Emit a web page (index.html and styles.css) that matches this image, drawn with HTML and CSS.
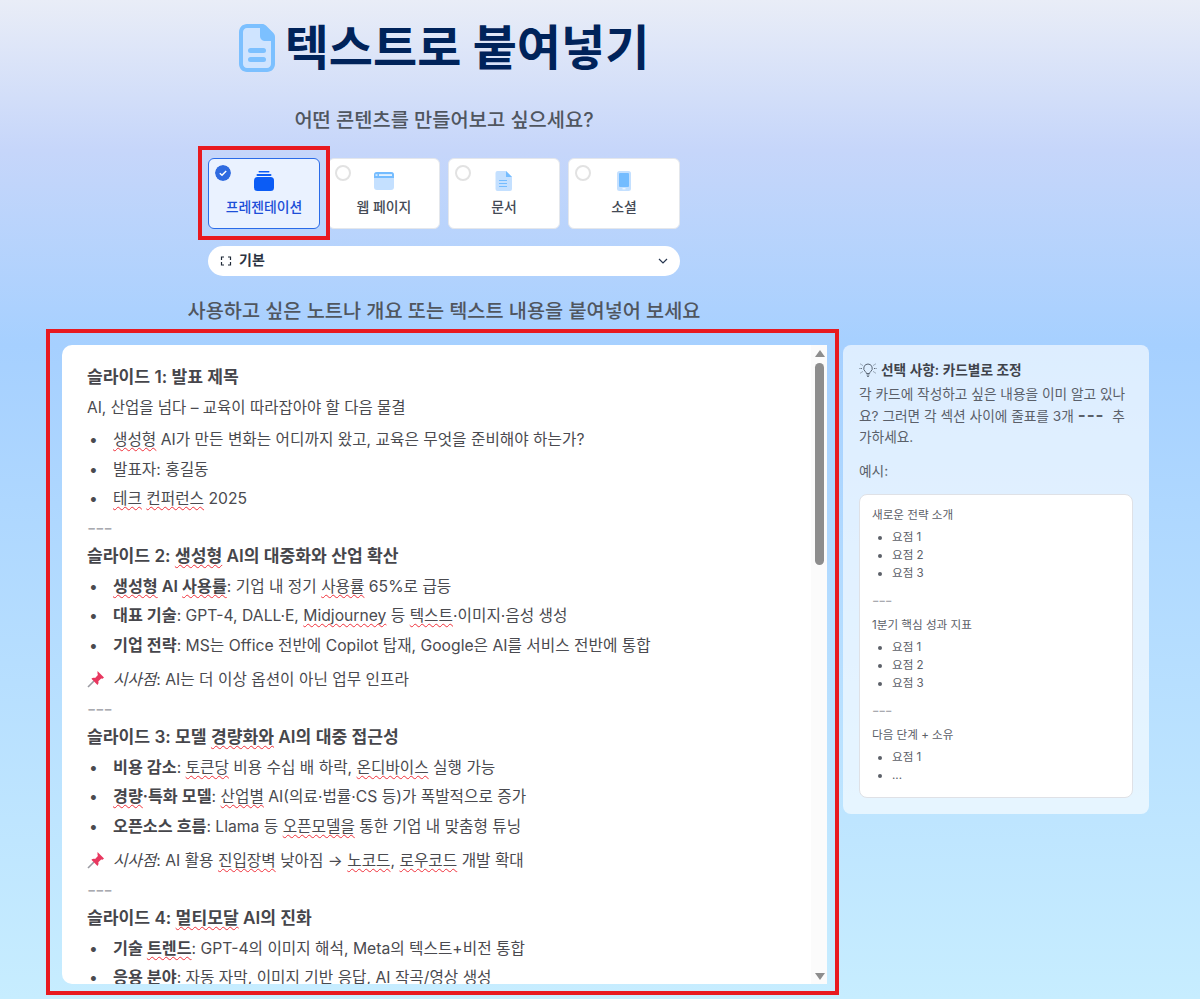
FILE: index.html
```html
<!DOCTYPE html>
<html lang="ko">
<head>
<meta charset="utf-8">
<title>텍스트로 붙여넣기</title>
<link rel="stylesheet" href="styles.css">
</head>
<body>
<div class="page">
  <div class="column">
    <h1 class="title">
      <svg class="title-icon" viewBox="0 0 36 48"><path fill="#7cc0ff" d="M8 0h15c1.600 0 3 .6 4.200 1.800l7 7C35.400 10 36 11.400 36 13v27c0 4.400-3.600 8-8 8H8c-4.400 0-8-3.600-8-8V8c0-4.400 3.600-8 8-8z"/><path fill="#cfe4ff" d="M4 8c0-2.200 1.800-4 4-4h13v8c0 2.800 2.200 5 5 5h6v23c0 2.200-1.800 4-4 4H8c-2.200 0-4-1.800-4-4z"/><rect x="9" y="24" width="18" height="5" rx="2.500" fill="#7cc0ff"/><rect x="9" y="33" width="18" height="5" rx="2.500" fill="#7cc0ff"/></svg>
      <span>텍스트로 붙여넣기</span>
    </h1>
    <h2 class="question">어떤 콘텐츠를 만들어보고 싶으세요?</h2>
    <div class="cards">
      <div class="card selected">
        <svg class="radio" viewBox="0 0 16 16"><circle cx="8" cy="8" r="8" fill="#2f6be0"/><path d="M4.800 8.300l2.200 2 4.200-4.300" fill="none" stroke="#fff" stroke-width="1.500"/></svg>
        <svg class="card-icon" viewBox="0 0 20 20"><rect x="4.500" y="0" width="11" height="1.500" rx=".7" fill="#0b5cf5"/><rect x="2.500" y="3" width="15" height="2" rx="1" fill="#0b5cf5"/><rect x="0" y="6" width="20" height="14" rx="3.500" fill="#0b5cf5"/></svg>
        <span class="card-label">프레젠테이션</span>
      </div>
      <div class="card">
        <span class="radio-empty"></span>
        <svg class="card-icon" viewBox="0 0 20 20"><rect y="1" width="20" height="18" rx="3" fill="#c4e0ff"/><path d="M3 1h14a3 3 0 0 1 3 3v3H0V4a3 3 0 0 1 3-3z" fill="#74bcff"/><rect x="1.500" y="3.300" width="2" height="1.500" fill="#e6f3ff"/><rect x="5" y="3.300" width="13" height="1.500" fill="#fff"/></svg>
        <span class="card-label">웹 페이지</span>
      </div>
      <div class="card">
        <span class="radio-empty"></span>
        <svg class="card-icon" viewBox="0 0 20 20"><path d="M3.500 0h8.500l6 6v12a2 2 0 0 1-2 2H3.500a2 2 0 0 1-2-2V2a2 2 0 0 1 2-2z" fill="#c4e0ff"/><path d="M12 0l6 6h-6z" fill="#74bcff"/><path d="M5 9.500h8M5 12.500h8M5 15.500h8" stroke="#74bcff" stroke-width="1"/></svg>
        <span class="card-label">문서</span>
      </div>
      <div class="card">
        <span class="radio-empty"></span>
        <svg class="card-icon" viewBox="0 0 20 20"><rect x="3" y="0" width="14" height="20" rx="2.500" fill="#c4e0ff"/><rect x="5" y="2" width="10" height="14" rx="1" fill="#74bcff"/><rect x="8.500" y="17.300" width="3" height="1" fill="#fff"/></svg>
        <span class="card-label">소셜</span>
      </div>
    </div>
    <div class="select">
      <svg class="select-icon" viewBox="0 0 12 12"><path d="M1.500 5V2H4M8 2h2.500v3M10.500 7v3H8M4 10H1.500V7" fill="none" stroke="#1f2937" stroke-width="1.200"/></svg>
      <span class="select-text">기본</span>
      <svg class="chevron" viewBox="0 0 12 12"><path d="M2 4l4 4 4-4" fill="none" stroke="#27364f" stroke-width="1.200"/></svg>
    </div>
    <h2 class="prompt">사용하고 싶은 노트나 개요 또는 텍스트 내용을 붙여넣어 보세요</h2>
  </div>
  <div class="workspace">
    <div class="editor">
      <div class="doc">
        <p class="head first">슬라이드 1: 발표 제목</p>
        <p class="para">AI, 산업을 넘다 – 교육이 따라잡아야 할 다음 물결</p>
        <ul class="list intro">
          <li><span class="typo">생성형</span> AI가 만든 변화는 어디까지 왔고, 교육은 무엇을 준비해야 하는가?</li>
          <li>발표자: 홍길동</li>
          <li><span class="typo">테크</span> <span class="typo">컨퍼런스</span> 2025</li>
        </ul>
        <p class="rule">---</p>
        <p class="head">슬라이드 2: <span class="typo">생성형</span> AI의 대중화와 산업 확산</p>
        <ul class="list">
          <li><b><span class="typo">생성형</span> AI <span class="typo">사용률</span></b>: 기업 내 정기 <span class="typo">사용률</span> 65%로 급등</li>
          <li><b>대표 기술</b>: GPT-4, DALL·E, <span class="typo">Midjourney</span> 등 <span class="typo">텍스트</span>·이미지·음성 생성</li>
          <li><b>기업 전략</b>: MS는 Office 전반에 Copilot 탑재, Google은 AI를 서비스 전반에 통합</li>
        </ul>
        <p class="note"><svg class="pin" viewBox="0 0 18 18"><path d="M1 17l6-6" stroke="#9a9aa2" stroke-width="1.600"/><path d="M10.500 1l6.500 6.500-1.500 1.300-1.300-.4-2.900 2.900c.5 1.500.2 2.600-.8 3.600L4.400 8.800c1-1 2.200-1.300 3.700-.8l2.800-2.900-.4-1.300z" fill="#e8375f"/></svg><i>시사점</i>: AI는 더 이상 옵션이 아닌 업무 인프라</p>
        <p class="rule">---</p>
        <p class="head">슬라이드 3: 모델 <span class="typo">경량화와</span> AI의 대중 접근성</p>
        <ul class="list">
          <li><b>비용 감소</b>: <span class="typo">토큰당</span> 비용 수십 배 하락, <span class="typo">온디바이스</span> 실행 가능</li>
          <li><b><span class="typo">경량</span>·특화 모델</b>: <span class="typo">산업별</span> AI(의료·법률·CS 등)가 폭발적으로 증가</li>
          <li><b>오픈소스 흐름</b>: Llama 등 <span class="typo">오픈모델을</span> 통한 기업 내 맞춤형 튜닝</li>
        </ul>
        <p class="note"><svg class="pin" viewBox="0 0 18 18"><path d="M1 17l6-6" stroke="#9a9aa2" stroke-width="1.600"/><path d="M10.500 1l6.500 6.500-1.500 1.300-1.300-.4-2.900 2.900c.5 1.500.2 2.600-.8 3.600L4.400 8.800c1-1 2.200-1.300 3.700-.8l2.800-2.900-.4-1.300z" fill="#e8375f"/></svg><i>시사점</i>: AI 활용 <span class="typo">진입장벽</span> 낮아짐 → <span class="typo">노코드</span>, <span class="typo">로우코드</span> 개발 확대</p>
        <p class="rule">---</p>
        <p class="head">슬라이드 4: <span class="typo">멀티모달</span> AI의 진화</p>
        <ul class="list">
          <li><b>기술 <span class="typo">트렌드</span></b>: GPT-4의 이미지 해석, Meta의 텍스트+비전 통합</li>
          <li><b>응용 분야</b>: 자동 자막, 이미지 기반 응답, AI 작곡/영상 생성</li>
        </ul>
      </div>
      <div class="scrollbar">
        <span class="arrow-up"></span>
        <span class="thumb"></span>
        <span class="arrow-down"></span>
      </div>
    </div>
    <aside class="tips">
      <p class="tips-title"><svg class="bulb" viewBox="0 0 18 16"><path d="M9 2a4.300 4.300 0 0 0-2.600 7.700c.6.500.9 1 1 1.800h3.200c.1-.8.400-1.300 1-1.800A4.300 4.300 0 0 0 9 2zM7.600 13h2.800M8.200 14.500h1.600" fill="none" stroke="#4b5563" stroke-width=".9"/><path d="M.5 6.500h2.500M15 6.500h2.500M1.500 2l2 1.300M16.500 2l-2 1.300M1.500 11l2-1.300M16.500 11l-2-1.300" stroke="#4b5563" stroke-width=".9" stroke-dasharray="1 .6"/></svg>선택 사항: 카드별로 조정</p>
      <p class="tips-text">각 카드에 작성하고 싶은 내용을 이미 알고 있나요? 그러면 각 섹션 사이에 줄표를 3개 <b class="dashes">---</b>&nbsp; 추가하세요.</p>
      <p class="tips-example">예시:</p>
      <div class="sample">
        <p class="sample-head">새로운 전략 소개</p>
        <ul class="sample-list"><li>요점 1</li><li>요점 2</li><li>요점 3</li></ul>
        <p class="sample-rule">---</p>
        <p class="sample-head">1분기 핵심 성과 지표</p>
        <ul class="sample-list"><li>요점 1</li><li>요점 2</li><li>요점 3</li></ul>
        <p class="sample-rule">---</p>
        <p class="sample-head">다음 단계 + 소유</p>
        <ul class="sample-list"><li>요점 1</li><li>...</li></ul>
      </div>
    </aside>
  </div>
</div>
<div class="mark mark-card"></div>
<div class="mark mark-editor"></div>
</body>
</html>
```
FILE: styles.css
```css
* { box-sizing: border-box; }
html, body { margin: 0; height: 999px; overflow: hidden; }
body {
  font-family: Inter, "Noto Sans CJK KR", sans-serif;
  color: #4a4a4f;
  background: linear-gradient(180deg, #e9edf7 0, #c6d6fa 150px, #a6d0ff 345px, #c7edff 999px);
  position: relative;
}
p, h1, h2, ul { margin: 0; padding: 0; }
.page { padding: 17px 0 0 62px; }
.column { display: flex; flex-direction: column; align-items: center; margin-left: 146px; width: 472px; }
.title {
  display: flex; align-items: center; gap: 10px;
  font-size: 48px; line-height: 62px; font-weight: 700; color: #00235a; white-space: nowrap;
}
.title-icon { width: 36px; height: 48px; }
.question { margin-top: 26px; font-size: 19.800px; line-height: 30px; font-weight: 500; color: #50565f; white-space: nowrap; }
.cards { display: flex; gap: 8px; margin-top: 23px; }
.card {
  position: relative; width: 112px; height: 71px; background: #fff;
  border: 1px solid #e4e7ec; border-radius: 6px;
  display: flex; flex-direction: column; align-items: center; padding-top: 12px;
}
.card.selected { background: #eaf2ff; border-color: #2a6be8; }
.card-icon { width: 20px; height: 20px; }
.card-label { margin-top: 6px; font-size: 13.900px; line-height: 20px; font-weight: 500; color: #444a55; }
.selected .card-label { color: #1d4ed8; }
.radio, .radio-empty { position: absolute; left: 6px; top: 6px; width: 16px; height: 16px; border-radius: 50%; }
.radio-empty { border: 2px solid #e2e2e2; }
.select {
  margin-top: 17px; width: 472px; height: 30px; background: #fff; border-radius: 15px;
  display: flex; align-items: center; padding: 0 11px 0 12px;
}
.select-icon { width: 12px; height: 12px; }
.select-text { margin-left: 7px; font-size: 14px; line-height: 28px; align-self: flex-start; font-weight: 600; color: #2b3342; flex: 1; }
.chevron { width: 12px; height: 12px; }
.prompt { margin-top: 20px; font-size: 19.700px; line-height: 30px; font-weight: 500; color: #50565f; white-space: nowrap; }
.workspace { display: flex; align-items: flex-start; gap: 16px; margin-top: 19px; }
.editor {
  position: relative; width: 765px; height: 639px; background: #fff;
  border-radius: 10px 0 0 10px; overflow: hidden;
}
.doc { padding: 0 25px; font-size: 15.700px; color: #4a4a4f; }
.doc b { font-weight: 600; font-size: 16.200px; line-height: 1; color: #46464b; }
.head { font-size: 17.150px; line-height: 22px; font-weight: 600; color: #46464b; margin-top: 6px; }
.head.first { margin-top: 21px; }
.para { font-size: 15.500px; line-height: 22px; margin-top: 9px; }
.list { list-style: none; padding-left: 26px; margin-top: 10px; }
.head + .list { margin-top: 9px; }
.list li { line-height: 22px; margin-bottom: 7.500px; }
.list.intro li:last-child { margin-bottom: 6.500px; }
.list li::before { content: "•"; display: inline-block; width: 26px; margin-left: -24px; margin-right: -2px; color: #4a4a4f; }
.rule { line-height: 22px; color: #a9aab0; font-size: 20px; font-weight: 400; letter-spacing: -1px; }
.note { line-height: 22px; margin-top: 12px; margin-bottom: 7px; }
.pin { width: 18px; height: 18px; margin-right: 8px; vertical-align: -3px; }
.typo { text-decoration: underline wavy #f0303a 1.300px; text-underline-offset: 2px; text-decoration-skip-ink: none; }
.scrollbar { position: absolute; right: 0; top: 0; bottom: 0; width: 16px; background: #fbfbfb; }
.thumb { position: absolute; left: 4px; top: 18px; width: 9px; height: 202px; background: #8d8d8d; border-radius: 5px; }
.arrow-up, .arrow-down { position: absolute; left: 4px; width: 0; height: 0; border-left: 5px solid transparent; border-right: 5px solid transparent; }
.arrow-up { top: 5px; border-bottom: 7px solid #8d8d8d; }
.arrow-down { bottom: 4px; border-top: 7px solid #8d8d8d; }
.tips {
  width: 306px; height: 469px; padding: 16px; border-radius: 8px;
  background: rgba(255, 255, 255, .62); font-size: 13.700px; color: #5a5f69;
}
.tips-title { display: flex; align-items: center; font-weight: 600; line-height: 18px; color: #3f434b; }
.bulb { width: 18px; height: 16px; margin-right: 4px; }
.tips-text { margin-top: 5px; line-height: 21.500px; }
.dashes { font-weight: 700; font-size: 17px; line-height: 16px; letter-spacing: 1px; }
.tips-example { margin-top: 12px; line-height: 21px; }
.sample {
  margin-top: 12px; width: 274px; height: 304px; background: #fff; border: 1px solid #dfe1e6;
  border-radius: 8px; padding: 12px 12px; font-size: 11.600px; color: #5c6068;
}
.sample-head { line-height: 17px; }
.sample-list { list-style: disc; padding-left: 20px; margin-top: 4px; }
.sample-list li { line-height: 18px; }
.sample-rule { margin-top: 9px; margin-bottom: 8px; line-height: 18px; font-size: 16px; letter-spacing: -.8px; color: #a9aab0; }
.mark { position: absolute; border: 4px solid #e8191f; pointer-events: none; }
.mark-card { left: 198px; top: 146px; width: 132px; height: 94px; }
.mark-editor { left: 46px; top: 329px; width: 793px; height: 666px; }
```
